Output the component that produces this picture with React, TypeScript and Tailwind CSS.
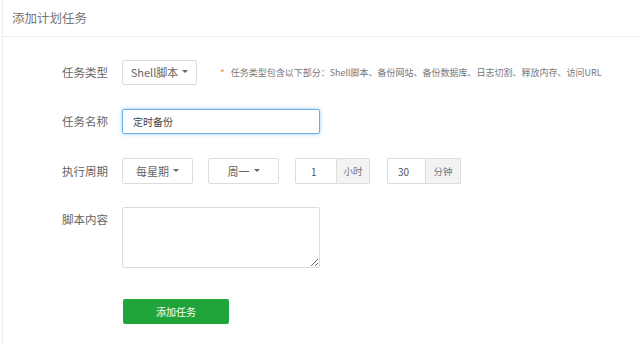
import React from "react";

const Caret = () => (
  <span className="inline-block ml-[4px] w-0 h-0 border-x-[3px] border-x-transparent border-t-[3px] border-t-[#666] align-middle relative top-[-1px]" />
);

const Label = ({ children }: { children: React.ReactNode }) => (
  <div className="w-[105px] shrink-0 text-right text-[11.5px] text-[#666] leading-[25px]">{children}</div>
);

export default function App() {
  return (
    <div
      className="w-[640px] h-[345px] bg-white overflow-hidden pl-[2px]"
      style={{ fontFamily: "'Noto Sans CJK SC', 'Noto Sans', sans-serif" }}
    >
      <div className="h-full border-l border-[#ececec]">
        <div className="h-[37px] border-b border-[#eeeeee] pl-[9px] flex items-center text-[12.5px] text-[#777]">
          添加计划任务
        </div>
        <div className="pt-[23px] flex flex-col gap-6">
          {/* Row 1 */}
          <div className="flex items-center gap-[14px]">
            <Label>任务类型</Label>
            <div className="flex items-center">
              <div className="w-[75px] h-[25px] border border-[#dcdcdc] rounded-[2px] flex items-center justify-center text-[11px] text-[#666]">
                Shell脚本<Caret />
              </div>
              <div className="ml-[23px] flex items-center text-[9px] text-[#777]">
                <span className="text-[#f0863c] mr-[6px] text-[10px]">*</span>
                任务类型包含以下部分：Shell脚本、备份网站、备份数据库、日志切割、释放内存、访问URL
              </div>
            </div>
          </div>
          {/* Row 2 */}
          <div className="flex items-center gap-[14px]">
            <Label>任务名称</Label>
            <input
              readOnly
              defaultValue="定时备份"
              className="w-[198px] h-[25px] border border-[#66afe9] rounded-[2px] pl-[10px] text-[10px] text-[#444] outline-none shadow-[0_0_4px_rgba(102,175,233,0.6)]"
            />
          </div>
          {/* Row 3 */}
          <div className="flex items-center gap-[14px]">
            <Label>执行周期</Label>
            <div className="flex items-center">
              <div className="w-[71px] h-[26px] border border-[#dcdcdc] rounded-[2px] flex items-center justify-center text-[11px] text-[#666]">
                每星期<Caret />
              </div>
              <div className="ml-[15px] w-[71px] h-[26px] border border-[#dcdcdc] rounded-[2px] flex items-center justify-center text-[11px] text-[#666]">
                周一<Caret />
              </div>
              <div className="ml-[16px] flex h-[26px]">
                <div className="w-[42px] border border-[#dcdcdc] rounded-l-[2px] flex items-center pl-[15px] text-[10px] text-[#555]">1</div>
                <div className="w-[33px] border border-l-0 border-[#dcdcdc] bg-[#f3f3f3] rounded-r-[2px] flex items-center justify-center text-[9.5px] text-[#777]">小时</div>
              </div>
              <div className="ml-[17px] flex h-[26px]">
                <div className="w-[39px] border border-[#dcdcdc] rounded-l-[2px] flex items-center pl-[10px] text-[10px] text-[#555]">30</div>
                <div className="w-[35px] border border-l-0 border-[#dcdcdc] bg-[#f3f3f3] rounded-r-[2px] flex items-center justify-center text-[9.5px] text-[#777]">分钟</div>
              </div>
            </div>
          </div>
          {/* Row 4 */}
          <div className="flex items-start gap-[14px] mt-[-1px]">
            <Label>脚本内容</Label>
            <textarea
              readOnly
              className="w-[198px] h-[61px] border border-[#dcdcdc] rounded-[2px] outline-none resize-y block"
            />
          </div>
          {/* Button */}
          <div className="flex items-center gap-[14px] mt-[7px]">
            <div className="w-[106px] shrink-0" />
            <button className="w-[106px] h-[25px] bg-[#20a53a] rounded-[2px] text-white text-[10px] flex items-center justify-center">
              添加任务
            </button>
          </div>
        </div>
      </div>
    </div>
  );
}
